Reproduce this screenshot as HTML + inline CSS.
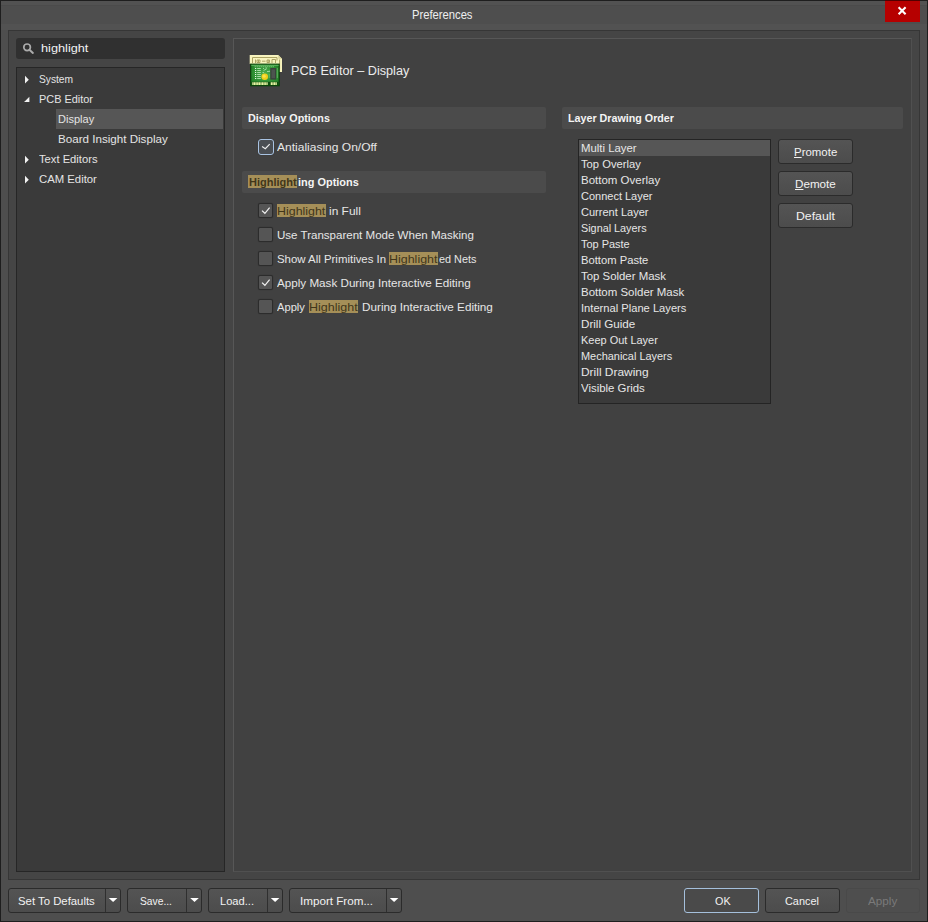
<!DOCTYPE html>
<html><head><meta charset="utf-8"><title>Preferences</title>
<style>
*{box-sizing:border-box;margin:0;padding:0}
html,body{width:928px;height:922px;overflow:hidden;background:#4e4e4e}
body{font-family:"Liberation Sans",sans-serif;font-size:12px;color:#e6e6e6;position:relative}
.abs{position:absolute}
.t{position:absolute;white-space:nowrap;transform-origin:0 0}
.hb{position:absolute;height:13px;background:#a58f58}
#win{left:0;top:0;width:928px;height:922px;border:1px solid #1e1e1e;background:#4e4e4e linear-gradient(#525252 0,#525252 4px,#4b4b4b 4px,#4b4b4b 5px,#4e4e4e 5px,#4e4e4e 23px,#525252 23px,#525252 29px,#4e4e4e 29px) no-repeat 0 0/100% 30px}
#close{left:885px;top:0;width:35px;height:22px;background:#b60000;border-top:1px solid #520000}
#client{left:8px;top:30px;width:912px;height:850px;background:#454545;border:1px solid #363636}
#search{left:16px;top:38px;width:209px;height:21px;background:#303030;border-radius:3px}
#tree{left:16px;top:67px;width:209px;height:805px;background:#3a3a3a;border:1px solid #262626}
#sel{left:56px;top:109px;width:167px;height:20px;background:#565656}
#panel{left:233px;top:38px;width:679px;height:834px;background:#414141;border:1px solid #575757;border-right-color:#505050;border-bottom-color:#505050}
.hdr{position:absolute;height:22px;background:#4b4b4b;border-radius:2px}
.cb{position:absolute;width:15px;height:15px;background:#555;border:1px solid #2c2c2c;border-radius:2px;box-shadow:0 0 1px rgba(0,0,0,.35)}
#list{left:578px;top:139px;width:193px;height:265px;background:#3a3a3a;border:1px solid #242424}
#lsel{left:579px;top:140px;width:191px;height:16px;background:#565656}
.btn{position:absolute;height:24px;background:linear-gradient(#545454,#4c4c4c);border:1px solid #2b2b2b;border-radius:3px}
.split{position:absolute;top:0;bottom:0;width:1px;background:#2f2f2f}
</style></head><body>
<div id="win" class="abs"></div>
<div id="close" class="abs"><svg width="35" height="21" viewBox="0 0 35 21" style="display:block"><path d="M13.6 6.2l7 7M20.6 6.2l-7 7" stroke="#fff" stroke-width="2.1" fill="none"/></svg></div>
<div id="client" class="abs"></div>
<div id="search" class="abs"><svg width="24" height="21" viewBox="0 0 24 21" style="display:block"><circle cx="11.1" cy="9.3" r="3.3" stroke="#ababab" stroke-width="1.700" fill="none"/><path d="M13.700 11.900l3.200 3" stroke="#ababab" stroke-width="2" stroke-linecap="round"/></svg></div>
<div id="tree" class="abs"></div>
<div id="sel" class="abs"></div>
<svg class="abs" style="left:20px;top:70px" width="14" height="120" viewBox="0 0 14 120">
<path d="M5 5.8l3.8 3.9L5 13.6z" fill="#f2f2f2"/>
<path d="M9.4 26.8v5.3H4.1z" fill="#f2f2f2"/>
<path d="M5 85.8l3.8 3.9L5 93.600z" fill="#f2f2f2"/>
<path d="M5 105.8l3.8 3.9L5 113.6z" fill="#f2f2f2"/>
</svg>
<div id="panel" class="abs"></div>
<!--ICON0--><svg class="abs" style="left:246px;top:51px" width="40" height="40" viewBox="0 0 40 40">
<defs><radialGradient id="gb" cx="0.5" cy="0.45" r="0.7"><stop offset="0" stop-color="#4fae4f"/><stop offset="0.6" stop-color="#2f9133"/><stop offset="1" stop-color="#1f7a25"/></radialGradient></defs>
<path d="M3.700 4h28.600l3.700 3.700v13.200h-3v-8h-29.300z" fill="#f8f4be"/>
<path d="M32.300 4v3.700h3.700z" fill="#d6cf96"/>
<path d="M6.500 12v-5.500h24.500M9.500 8.500v3.500M11 9h3v2.500h-3zM12.500 9v2.500M16 10.200h3.500M21 9h2.500v2.500h-2.500zM22.200 9v2.500M26 12v-3.500h3.500v3.500M31 6.500v3M33.600 8.500v10" stroke="#aca463" stroke-width="1" fill="none"/>
<rect x="4.100" y="12.600" width="29.700" height="22.700" fill="#0a430a"/>
<rect x="5.300" y="13.800" width="27.300" height="20.200" fill="url(#gb)"/>
<path d="M5.300 14.300h27.300" stroke="#63ba63" stroke-width="1"/>
<path d="M8.700 15.700h19" stroke="#9bd89b" stroke-width="0.9" stroke-dasharray="1 1"/>
<path d="M9 17.500h1.200M9 19.500h1.200M9 21.500h1.200M9 23.500h1.200M9 25.500h1.200M9 27.500h1.200" stroke="#e4f8e4" stroke-width="1"/>
<path d="M11.200 17.500h3.600M11.200 19.500h3.600M11.200 21.500h3.600M11.200 23.500h3.600M11.200 25.500h3.600M11.200 27.500h3.600" stroke="#a6dca6" stroke-width="1"/>
<path d="M17 17.500h1M19.500 17h1.500M17.500 19.500l3-1.500M21 20.500h3M16.500 21.500h1.500" stroke="#9cd89c" stroke-width="1"/>
<rect x="24.300" y="17" width="5.900" height="11.600" fill="#39413b"/>
<rect x="25.500" y="18.400" width="3.500" height="8.800" fill="#4c554f"/>
<path d="M30.800 18h1.200M30.800 20h1.200M30.800 22h1.200M30.800 24h1.200M30.800 26h1.200M22.700 20h1.200M22.700 24h1.200M22.700 26h1.200" stroke="#86c886" stroke-width="0.9"/>
<circle cx="18.700" cy="25.800" r="3.300" fill="#efcf18"/>
<circle cx="18.100" cy="25.200" r="1.600" fill="#f9e24a"/>
<rect x="5.300" y="30.800" width="27.300" height="3.600" fill="#0d4d0d"/>
<path d="M6.300 32.600h15.400M24.700 32.600h6.400" stroke="#e8f6a4" stroke-width="2.600" stroke-dasharray="1.300 0.300"/>
</svg>
<!--ICON1-->
<div class="hdr" style="left:242px;top:107px;width:304px"></div>
<div class="hdr" style="left:562px;top:107px;width:341px"></div>
<div class="hdr" style="left:242px;top:171px;width:304px"></div>
<div class="cb" style="left:258px;top:139px;width:16px;height:16px;border-color:#a9c3e2;background:#4a4e53;border-radius:3px"></div>
<div class="cb" style="left:258px;top:203px"></div>
<div class="cb" style="left:258px;top:227px"></div>
<div class="cb" style="left:258px;top:251px"></div>
<div class="cb" style="left:258px;top:275px"></div>
<div class="cb" style="left:258px;top:299px"></div>
<svg class="abs" style="left:258px;top:139px" width="15" height="180" viewBox="0 0 15 180">
<path d="M4.1 7.600l3.200 2.100L11.700 5.200" stroke="#eeeeee" stroke-width="1.200" fill="none"/>
<path d="M4 71.6l2.9 2.7L11.6 68.7" stroke="#f0f0f0" stroke-width="1.2" fill="none"/>
<path d="M4 143.6l2.9 2.7L11.6 140.7" stroke="#f0f0f0" stroke-width="1.2" fill="none"/>
</svg>
<div id="list" class="abs"></div>
<div id="lsel" class="abs"></div>
<div class="btn" style="left:778px;top:139px;width:75px;height:25px"></div>
<div class="btn" style="left:778px;top:171px;width:75px;height:25px"></div>
<div class="btn" style="left:778px;top:203px;width:75px;height:25px"></div>
<div class="btn" style="left:8px;top:888px;width:113px;height:25px"><div class="split" style="right:14px"></div></div>
<div class="btn" style="left:127px;top:888px;width:75px;height:25px"><div class="split" style="right:14px"></div></div>
<div class="btn" style="left:208px;top:888px;width:75px;height:25px"><div class="split" style="right:14px"></div></div>
<div class="btn" style="left:289px;top:888px;width:113px;height:25px"><div class="split" style="right:14px"></div></div>
<svg class="abs" style="left:0;top:896px" width="410" height="10" viewBox="0 0 410 10">
<path d="M108.8 1.900h8.600l-4.300 4.200z" fill="#fff"/>
<path d="M190.2 1.900h8.600l-4.300 4.200z" fill="#fff"/>
<path d="M270.8 1.900h8.600l-4.300 4.200z" fill="#fff"/>
<path d="M389.8 1.900h8.600l-4.300 4.200z" fill="#fff"/>
</svg>
<div class="btn" style="left:684px;top:888px;width:75px;height:25px;border-color:#a5c0dc;background:#4a4a4a"></div>
<div class="btn" style="left:765px;top:888px;width:75px;height:25px"></div>
<div class="btn" style="left:846px;top:888px;width:74px;height:25px;background:#4e4e4e;border-color:#494949"></div>
<div class="hb" style="left:248px;top:175px;width:49px"></div>
<div class="hb" style="left:277px;top:204px;width:49px"></div>
<div class="hb" style="left:389px;top:252px;width:49px"></div>
<div class="hb" style="left:309px;top:300px;width:49px"></div>
<div id="ttl" class="t" style="left:412.00px;top:7px;font-size:13px;line-height:16px;color:#eeeeee;transform:scaleX(0.8629)">Preferences</div>
<div id="srch" class="t" style="left:41.00px;top:40px;font-size:11.5px;line-height:16px;color:#f2f2f2;transform:scaleX(1.1067)">highlight</div>
<div id="tr0" class="t" style="left:39.00px;top:71px;font-size:11.5px;line-height:16px;color:#e4e4e4;transform:scaleX(0.8885)">System</div>
<div id="tr1" class="t" style="left:39.00px;top:91px;font-size:11.5px;line-height:16px;color:#e4e4e4;transform:scaleX(0.9483)">PCB Editor</div>
<div id="tr2" class="t" style="left:58.00px;top:111px;font-size:11.5px;line-height:16px;color:#e4e4e4;transform:scaleX(0.9593)">Display</div>
<div id="tr3" class="t" style="left:58.00px;top:131px;font-size:11.5px;line-height:16px;color:#e4e4e4;transform:scaleX(1.0097)">Board Insight Display</div>
<div id="tr4" class="t" style="left:39.00px;top:151px;font-size:11.5px;line-height:16px;color:#e4e4e4;transform:scaleX(0.9737)">Text Editors</div>
<div id="tr5" class="t" style="left:39.00px;top:171px;font-size:11.5px;line-height:16px;color:#e4e4e4;transform:scaleX(0.9840)">CAM Editor</div>
<div id="ptitle" class="t" style="left:291.00px;top:63px;font-size:13px;line-height:16px;color:#ececec;transform:scaleX(0.9746)">PCB Editor – Display</div>
<div id="h1" class="t" style="left:248.00px;top:110px;font-size:11.5px;line-height:16px;color:#f4f4f4;transform:scaleX(0.9359);font-weight:bold">Display Options</div>
<div id="h2" class="t" style="left:568.00px;top:110px;font-size:11.5px;line-height:16px;color:#f4f4f4;transform:scaleX(0.9318);font-weight:bold">Layer Drawing Order</div>
<div id="h3a" class="t" style="left:249.00px;top:174px;font-size:11.5px;line-height:16px;color:#41361a;transform:scaleX(0.9577);font-weight:bold">Highlight</div>
<div id="h3b" class="t" style="left:298.00px;top:174px;font-size:11.5px;line-height:16px;color:#f4f4f4;transform:scaleX(0.9523);font-weight:bold">ing Options</div>
<div id="c0" class="t" style="left:277.00px;top:139px;font-size:11.5px;line-height:16px;color:#e6e6e6;transform:scaleX(1.0448)">Antialiasing On/Off</div>
<div id="c1a" class="t" style="left:277.00px;top:203px;font-size:11.5px;line-height:16px;color:#41361a;transform:scaleX(1.0794)">Highlight</div>
<div id="c1b" class="t" style="left:329.00px;top:203px;font-size:11.5px;line-height:16px;color:#e6e6e6;transform:scaleX(1.0372)">in Full</div>
<div id="c2" class="t" style="left:277.00px;top:227px;font-size:11.5px;line-height:16px;color:#e6e6e6;transform:scaleX(1.0037)">Use Transparent Mode When Masking</div>
<div id="c3a" class="t" style="left:277.00px;top:251px;font-size:11.5px;line-height:16px;color:#e6e6e6;transform:scaleX(0.9927)">Show All Primitives In</div>
<div id="c3b" class="t" style="left:389.00px;top:251px;font-size:11.5px;line-height:16px;color:#41361a;transform:scaleX(1.0831)">Highlight</div>
<div id="c3c" class="t" style="left:439.00px;top:251px;font-size:11.5px;line-height:16px;color:#e6e6e6;transform:scaleX(0.9423)">ed Nets</div>
<div id="c4" class="t" style="left:277.00px;top:275px;font-size:11.5px;line-height:16px;color:#e6e6e6;transform:scaleX(1.0133)">Apply Mask During Interactive Editing</div>
<div id="c5a" class="t" style="left:277.00px;top:299px;font-size:11.5px;line-height:16px;color:#e6e6e6;transform:scaleX(0.9699)">Apply</div>
<div id="c5b" class="t" style="left:309.00px;top:299px;font-size:11.5px;line-height:16px;color:#41361a;transform:scaleX(1.0869)">Highlight</div>
<div id="c5c" class="t" style="left:362.00px;top:299px;font-size:11.5px;line-height:16px;color:#e6e6e6;transform:scaleX(1.0187)">During Interactive Editing</div>
<div id="l0" class="t" style="left:581.00px;top:140px;font-size:11.5px;line-height:16px;color:#e6e6e6;transform:scaleX(0.9889)">Multi Layer</div>
<div id="l1" class="t" style="left:581.00px;top:156px;font-size:11.5px;line-height:16px;color:#e6e6e6;transform:scaleX(0.9744)">Top Overlay</div>
<div id="l2" class="t" style="left:581.00px;top:172px;font-size:11.5px;line-height:16px;color:#e6e6e6;transform:scaleX(0.9986)">Bottom Overlay</div>
<div id="l3" class="t" style="left:581.00px;top:188px;font-size:11.5px;line-height:16px;color:#e6e6e6;transform:scaleX(0.9559)">Connect Layer</div>
<div id="l4" class="t" style="left:581.00px;top:204px;font-size:11.5px;line-height:16px;color:#e6e6e6;transform:scaleX(0.9600)">Current Layer</div>
<div id="l5" class="t" style="left:581.00px;top:220px;font-size:11.5px;line-height:16px;color:#e6e6e6;transform:scaleX(0.9405)">Signal Layers</div>
<div id="l6" class="t" style="left:581.00px;top:236px;font-size:11.5px;line-height:16px;color:#e6e6e6;transform:scaleX(0.9522)">Top Paste</div>
<div id="l7" class="t" style="left:581.00px;top:252px;font-size:11.5px;line-height:16px;color:#e6e6e6;transform:scaleX(0.9755)">Bottom Paste</div>
<div id="l8" class="t" style="left:581.00px;top:268px;font-size:11.5px;line-height:16px;color:#e6e6e6;transform:scaleX(0.9911)">Top Solder Mask</div>
<div id="l9" class="t" style="left:581.00px;top:284px;font-size:11.5px;line-height:16px;color:#e6e6e6;transform:scaleX(0.9960)">Bottom Solder Mask</div>
<div id="l10" class="t" style="left:581.00px;top:300px;font-size:11.5px;line-height:16px;color:#e6e6e6;transform:scaleX(0.9697)">Internal Plane Layers</div>
<div id="l11" class="t" style="left:581.00px;top:316px;font-size:11.5px;line-height:16px;color:#e6e6e6;transform:scaleX(1.0113)">Drill Guide</div>
<div id="l12" class="t" style="left:581.00px;top:332px;font-size:11.5px;line-height:16px;color:#e6e6e6;transform:scaleX(0.9536)">Keep Out Layer</div>
<div id="l13" class="t" style="left:581.00px;top:348px;font-size:11.5px;line-height:16px;color:#e6e6e6;transform:scaleX(0.9514)">Mechanical Layers</div>
<div id="l14" class="t" style="left:581.00px;top:364px;font-size:11.5px;line-height:16px;color:#e6e6e6;transform:scaleX(1.0373)">Drill Drawing</div>
<div id="l15" class="t" style="left:581.00px;top:380px;font-size:11.5px;line-height:16px;color:#e6e6e6;transform:scaleX(0.9919)">Visible Grids</div>
<div id="b1" class="t" style="left:794.00px;top:144px;font-size:11.5px;line-height:16px;color:#f2f2f2;transform:scaleX(0.9956)"><u>P</u>romote</div>
<div id="b2" class="t" style="left:795.00px;top:176px;font-size:11.5px;line-height:16px;color:#f2f2f2;transform:scaleX(1.0132)"><u>D</u>emote</div>
<div id="b3" class="t" style="left:796.00px;top:208px;font-size:11.5px;line-height:16px;color:#f2f2f2;transform:scaleX(1.0664)">Default</div>
<div id="bb1" class="t" style="left:18.00px;top:893px;font-size:11.5px;line-height:16px;color:#f2f2f2;transform:scaleX(0.9872)">Set To Defaults</div>
<div id="bb2" class="t" style="left:140.00px;top:893px;font-size:11.5px;line-height:16px;color:#f2f2f2;transform:scaleX(0.8923)">Save...</div>
<div id="bb3" class="t" style="left:220.00px;top:893px;font-size:11.5px;line-height:16px;color:#f2f2f2;transform:scaleX(0.9671)">Load...</div>
<div id="bb4" class="t" style="left:300.00px;top:893px;font-size:11.5px;line-height:16px;color:#f2f2f2;transform:scaleX(1.0123)">Import From...</div>
<div id="ok" class="t" style="left:715.00px;top:893px;font-size:11.5px;line-height:16px;color:#f2f2f2;transform:scaleX(0.9366)">OK</div>
<div id="cancel" class="t" style="left:785.00px;top:893px;font-size:11.5px;line-height:16px;color:#f2f2f2;transform:scaleX(0.9462)">Cancel</div>
<div id="apply" class="t" style="left:868.00px;top:893px;font-size:11.5px;line-height:16px;color:#7a7a7a;transform:scaleX(1.0158)">Apply</div>
</body></html>
